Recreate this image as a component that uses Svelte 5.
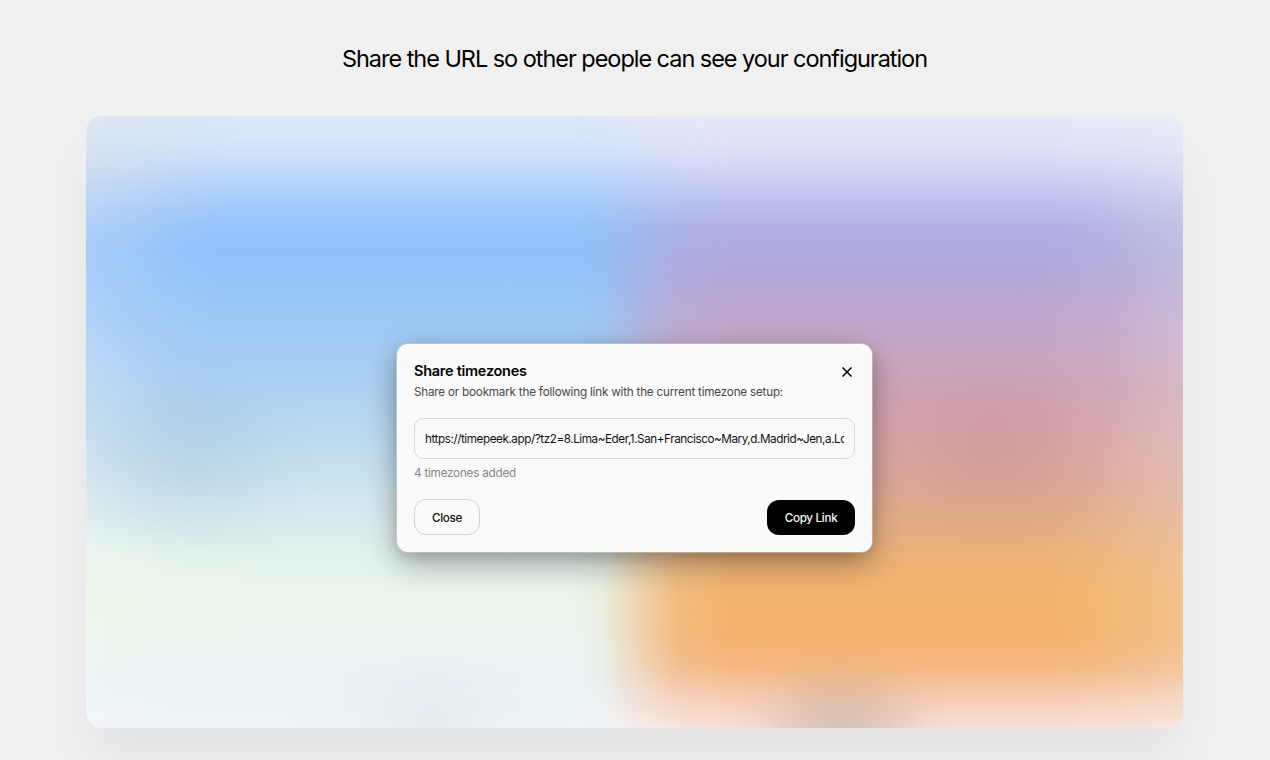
<script lang="ts">
  const heading = "Share the URL so other people can see your configuration";
  const link =
    "https://timepeek.app/?tz2=8.Lima~Eder,1.San+Francisco~Mary,d.Madrid~Jen,a.London~Sam";
  const zones = ["Lima", "San Francisco", "Madrid", "London"];

  let open = $state(true);

  function close() {
    open = false;
  }

  function copyLink() {
    navigator.clipboard?.writeText(link);
  }
</script>

<main class="page">
  <h1>{heading}</h1>

  <section class="preview">
    {#if open}
      <div class="dialog" role="dialog" aria-labelledby="share-title">
        <header>
          <div>
            <h2 id="share-title">Share timezones</h2>
            <p class="lead">
              Share or bookmark the following link with the current timezone setup:
            </p>
          </div>
          <button class="icon" onclick={close} aria-label="Close dialog">
            <svg viewBox="0 0 10 10" width="10" height="10">
              <path d="M0.5 0.5 9.5 9.5M9.5 0.5 0.5 9.5" />
            </svg>
          </button>
        </header>

        <input type="text" readonly value={link} aria-label="Link" />
        <p class="count">{zones.length} timezones added</p>

        <footer>
          <button class="ghost" onclick={close}>Close</button>
          <button class="primary" onclick={copyLink}>Copy Link</button>
        </footer>
      </div>
    {/if}
  </section>
</main>

<style>
  :global(body) {
    background: #f0f0f0;
    overflow: hidden;
  }
  .page {
    box-sizing: border-box;
    height: 760px;
    padding: 43px 87px 32px 86px;
    display: flex;
    flex-direction: column;
    font-family: Inter, "Liberation Sans", sans-serif;
    color: #000;
  }
  h1,
  h2,
  p {
    margin: 0;
  }
  h1 {
    height: 32px;
    margin-bottom: 41px;
    font-size: 23.5px;
    line-height: 32px;
    font-weight: 400;
    letter-spacing: -1.04px;
    text-align: center;
    white-space: nowrap;
  }
  .preview {
    position: relative;
    flex: 1;
    display: flex;
    justify-content: center;
    align-items: flex-start;
    border-radius: 16px;
    box-shadow: 0 34px 52px -4px rgba(0, 0, 0, 0.05);
    background:
      radial-gradient(
        140px 120px at 100px 345px,
        rgba(110, 145, 175, 0.13),
        rgba(110, 145, 175, 0.08) 40%,
        rgba(110, 145, 175, 0.02) 75%,
        transparent
      ),
      radial-gradient(
        150px 90px at 345px 612px,
        rgba(150, 155, 165, 0.12),
        rgba(150, 155, 165, 0.06) 45%,
        transparent
      ),
      radial-gradient(200px 90px at 0 490px, rgba(245, 250, 225, 0.25), transparent),
      radial-gradient(150px 100px at 10px 40px, rgba(205, 215, 220, 0.35), transparent),
      linear-gradient(
        to right,
        rgba(255, 255, 255, 0.2),
        rgba(255, 255, 255, 0.13) 35px,
        rgba(255, 255, 255, 0.04) 80px,
        transparent 130px
      ),
      linear-gradient(
        #dde9f9 0,
        #d7e6f9 24px,
        #c9ddfa 46px,
        #b5d4fa 66px,
        #a3cafb 90px,
        #97c4fa 112px,
        #93c2fa 134px,
        #98c5f8 175px,
        #a0caf5 215px,
        #aad0f4 255px,
        #b3d5f0 290px,
        #bfdcee 330px,
        #cce3ed 365px,
        #daebee 404px,
        #e4f2ec 440px,
        #eaf5ed 485px,
        #eaf5f2 530px,
        #eaf4f7 564px,
        #f1f6fa 612px
      );
  }
  .preview::before {
    content: "";
    position: absolute;
    inset: 0;
    border-radius: inherit;
    background:
      radial-gradient(
        140px 105px at 905px 336px,
        rgba(165, 105, 110, 0.18),
        rgba(165, 105, 110, 0.11) 40%,
        rgba(165, 105, 110, 0.03) 75%,
        transparent
      ),
      radial-gradient(
        120px 90px at 755px 620px,
        rgba(155, 140, 130, 0.38),
        rgba(155, 140, 130, 0.22) 40%,
        rgba(155, 140, 130, 0.05) 75%,
        transparent
      ),
      linear-gradient(
        to left,
        rgba(245, 245, 240, 0.24),
        rgba(245, 245, 240, 0.15) 40px,
        rgba(245, 245, 240, 0.05) 90px,
        transparent 140px
      ),
      linear-gradient(
        #e7eaf8 0,
        #dfe1f5 32px,
        #cfd2f3 58px,
        #bbbeeb 88px,
        #b2b1e2 112px,
        #b0abde 135px,
        #b5a8d6 165px,
        #bfa8ce 205px,
        #c8a7c0 240px,
        #cfa4b5 275px,
        #d6a6ad 310px,
        #dba9a4 344px,
        #dfaa98 370px,
        #e4ae88 404px,
        #edb278 440px,
        #f2b46c 480px,
        #f3b26d 520px,
        #f4b883 552px,
        #f6cbb0 580px,
        #f8e1d5 612px
      );
    -webkit-mask-image: linear-gradient(
      to right,
      transparent 485px,
      rgba(0, 0, 0, 0.1) 517px,
      rgba(0, 0, 0, 0.5) 554px,
      rgba(0, 0, 0, 0.87) 592px,
      #000 645px
    );
    mask-image: linear-gradient(
      to right,
      transparent 485px,
      rgba(0, 0, 0, 0.1) 517px,
      rgba(0, 0, 0, 0.5) 554px,
      rgba(0, 0, 0, 0.87) 592px,
      #000 645px
    );
  }
  .dialog {
    position: relative;
    box-sizing: border-box;
    width: 475px;
    height: 208px;
    margin-top: 228px;
    padding: 18px 17px 17px;
    border-radius: 11px;
    background: #fafafa;
    box-shadow:
      0 0 0 1px rgba(215, 215, 215, 0.5),
      0 10px 32px rgba(0, 0, 0, 0.36),
      0 4px 12px rgba(0, 0, 0, 0.1);
  }
  header {
    display: flex;
    justify-content: space-between;
    align-items: flex-start;
    height: 56px;
  }
  h2 {
    font-size: 14.5px;
    line-height: 18px;
    font-weight: 600;
    letter-spacing: -0.27px;
  }
  .lead {
    margin-top: 3px;
    font-size: 11.7px;
    line-height: 18px;
    letter-spacing: -0.21px;
    color: #484848;
    white-space: nowrap;
  }
  button {
    box-sizing: border-box;
    border: 0;
    padding: 1px 0 0;
    font: 500 11.7px/18px Inter, "Liberation Sans", sans-serif;
    letter-spacing: -0.32px;
    color: #111;
  }
  .icon {
    display: grid;
    place-items: center;
    width: 18px;
    height: 18px;
    margin: 1px -1px 0 0;
    padding: 0;
    background: none;
  }
  .icon path {
    fill: none;
    stroke: #000;
    stroke-width: 1.5;
  }
  input {
    display: block;
    box-sizing: border-box;
    width: 441px;
    height: 41px;
    padding: 0 10px;
    border: 1px solid #d8d8d8;
    border-radius: 9px;
    background: #fafafa;
    outline: none;
    font: 400 11.7px/18px Inter, "Liberation Sans", sans-serif;
    letter-spacing: -0.43px;
    color: #111;
  }
  .count {
    margin-top: 5px;
    font-size: 11.7px;
    line-height: 18px;
    letter-spacing: -0.22px;
    color: #858585;
  }
  footer {
    display: flex;
    justify-content: space-between;
    align-items: flex-end;
    margin-top: 17px;
  }
  .ghost {
    width: 66px;
    height: 36px;
    border: 1px solid #d4d4d4;
    border-radius: 12px;
    background: #fafafa;
  }
  .primary {
    width: 88px;
    height: 35px;
    border-radius: 12px;
    background: #000;
    color: #fafafa;
  }
</style>
